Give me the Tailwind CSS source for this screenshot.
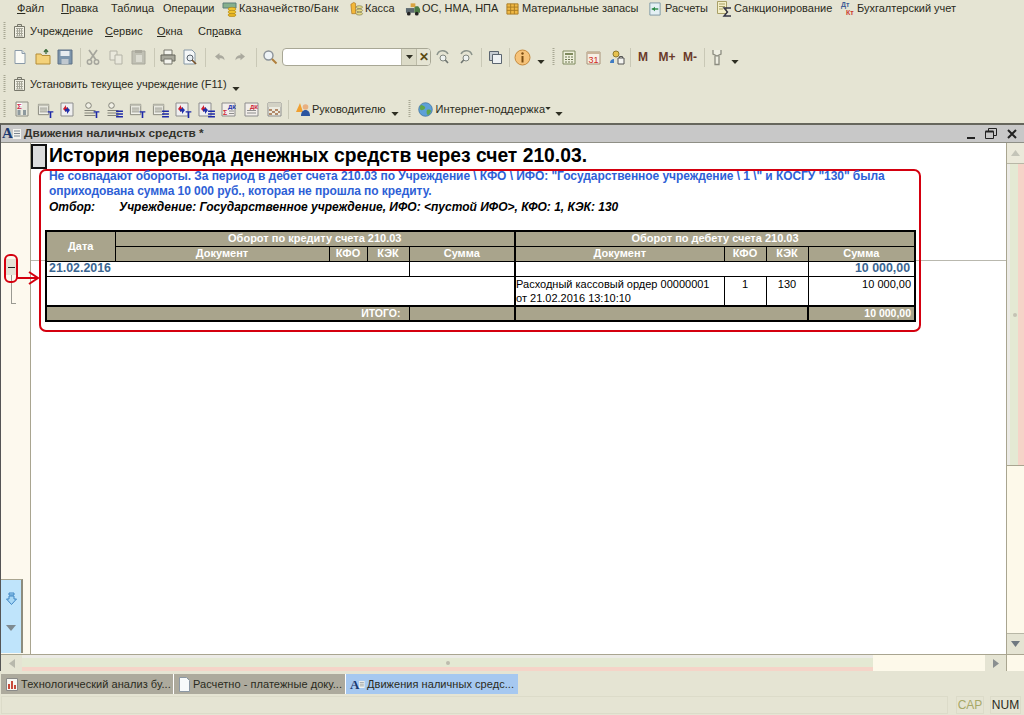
<!DOCTYPE html>
<html lang="ru">
<head>
<meta charset="UTF-8">
<title>Движения наличных средств</title>
<script src="https://cdn.jsdelivr.net/npm/@tailwindcss/browser@4"></script>
</head>
<body class="w-[1024px] h-[715px] overflow-hidden bg-[#e5e4d3] text-[#2a2a20] text-[11px] font-['Liberation_Sans',Arial,sans-serif] flex flex-col relative">

<!-- общие значки -->
<svg class="absolute w-0 h-0">
  <symbol id="doc" viewBox="0 0 16 16"><path d="M3 1.500h7l3 3v10H3z" fill="#fbfbf6" stroke="#8a9aa8"/><path d="M10 1.500v3h3" fill="#dfe6ea" stroke="#8a9aa8"/></symbol>
  <symbol id="build" viewBox="0 0 16 16"><path d="M5.500 1.500h4v2h-4z" fill="#d8d8cc" stroke="#77776a"/><path d="M2.500 3.500h10v11h-10z" fill="#f2f1e6" stroke="#77776a"/><path d="M4 5.500h7M4 8h7M4 10.500h7M4 13h7M5.500 5v8M7.500 5v8M9.500 5v8" stroke="#a5a598"/></symbol>
  <symbol id="sheet" viewBox="0 0 16 16"><path d="M1.500 2.500h11v11h-11z" fill="#f1f1ea" stroke="#85857a"/><path d="M1.500 2.500h11v2h-11z" fill="#c2c2b6"/><path d="M3 6.500h8M3 8.500h8M3 10.500h8" stroke="#8f8f84"/></symbol>
  <symbol id="arrow-down" viewBox="0 0 9 5"><path d="M0 0h9L4.500 5z" fill="#2e2e22"/></symbol>
  <symbol id="t-mark" viewBox="0 0 6 7"><path d="M.5 1h5v1.200H3.700V7H2.300V2.200H.5z" fill="#1c28a8"/></symbol>
  <symbol id="lines" viewBox="0 0 6 7"><path d="M0 1h6M0 3.500h6M0 6h6" stroke="#1c28a8" stroke-width="1.300"/></symbol>
  <symbol id="grip" viewBox="0 0 3 18"><path d="M1.500 0v18" stroke="#a8a794" stroke-width="2" stroke-dasharray="1 1"/></symbol>
  <symbol id="search" viewBox="0 0 16 16"><circle cx="6.500" cy="6.500" r="4.500" fill="#eef3f6" stroke="#8b9299" stroke-width="1.400"/><path d="M10 10l4.500 4.500" stroke="#b07f3c" stroke-width="2"/></symbol>
  <symbol id="find" viewBox="0 0 16 16"><path d="M2 6a6 6 0 0 1 11-1" fill="none" stroke="#8c948c" stroke-width="1.500"/><circle cx="8" cy="9" r="3" fill="#eef2f0" stroke="#80867f"/><path d="M10.300 11l2.700 3" stroke="#6f7570" stroke-width="1.600"/></symbol>
  <symbol id="report-a" viewBox="0 0 15 15"><path d="M1 1h12v13H1z" fill="#efeff0" stroke="#8d8d8d"/><path d="M3 7l3-4v2.500h2V8H6v2z" fill="#cc2030"/><path d="M10 8l-3 4V9.500H5V7h2V5z" fill="#2030a8"/></symbol>
  <symbol id="person" viewBox="0 0 14 15"><circle cx="5" cy="3.500" r="2.800" fill="#f1f0e6" stroke="#84847a"/><path d="M1 8.500h11M1 11h11M1 13.500h11" stroke="#84847a"/></symbol>
</svg>

<!-- меню 1 -->
<div class="h-[17px] flex items-center shrink-0 whitespace-nowrap">
  <span class="ml-[17px] w-[44px]"><u>Ф</u>айл</span>
  <span class="w-[50px]"><u>П</u>равка</span>
  <span class="w-[52px]">Таблица</span>
  <span class="w-[59px]">Операции</span>
  <span class="w-[17px]"><svg class="w-[16px] h-[16px]" viewBox="0 0 16 16"><path d="M1 2h13v5H1z" fill="#86b08c" stroke="#5c7f78"/><ellipse cx="10" cy="8" rx="4" ry="1.700" fill="#f2c52e" stroke="#a8821a" stroke-width=".6"/><ellipse cx="10" cy="11" rx="4" ry="1.700" fill="#f2c52e" stroke="#a8821a" stroke-width=".6"/><ellipse cx="10" cy="14" rx="4" ry="1.700" fill="#e6b422" stroke="#a8821a" stroke-width=".6"/></svg></span>
  <span class="w-[110px] tracking-[0.15px]">Казначейство/Банк</span>
  <span class="w-[16px]"><svg class="w-[15px] h-[16px]" viewBox="0 0 16 16"><path d="M2 3l3-2 2 1v11H3z" fill="#f3b83a" stroke="#a8701a" stroke-width=".7"/><ellipse cx="11" cy="6" rx="3.500" ry="1.500" fill="#e7dc8a" stroke="#6c6a3a" stroke-width=".6"/><ellipse cx="11" cy="9.500" rx="3.500" ry="1.500" fill="#e7dc8a" stroke="#6c6a3a" stroke-width=".6"/><ellipse cx="11" cy="13" rx="3.500" ry="1.500" fill="#e7dc8a" stroke="#6c6a3a" stroke-width=".6"/></svg></span>
  <span class="w-[40px]">Касса</span>
  <span class="w-[17px]"><svg class="w-[16px] h-[16px]" viewBox="0 0 17 16"><path d="M1 7h9v5H1z" fill="#5d6a70"/><path d="M10 5h4l2 3v4h-6z" fill="#4c7d45"/><circle cx="4" cy="13" r="2" fill="#222"/><circle cx="12.500" cy="13" r="2" fill="#222"/><path d="M6 2h5v4H6z" fill="#d9a441"/></svg></span>
  <span class="w-[84px]">ОС, НМА, НПА</span>
  <span class="w-[16px]"><svg class="w-[13px] h-[13px]" viewBox="0 0 14 14"><path d="M1 2h12v11H1z" fill="#f0b945" stroke="#a97b22"/><path d="M1 5.500h12M1 9h12M5 2v11M9 2v11" stroke="#a97b22"/></svg></span>
  <span class="w-[126px]">Материальные запасы</span>
  <span class="w-[17px]"><svg class="w-[14px] h-[14px]" viewBox="0 0 15 15"><path d="M2 1h11v13H2z" fill="#e4f0f4" stroke="#7c98a4"/><path d="M4 7.500h7" stroke="#2a8a45" stroke-width="1.500"/><path d="M7.500 5l-3 2.500 3 2.500z" fill="#2a8a45"/></svg></span>
  <span class="w-[51px]">Расчеты</span>
  <span class="w-[18px]"><svg class="w-[17px] h-[16px]" viewBox="0 0 17 16"><path d="M1.500.500h9v12h-9z" fill="#f4efc8" stroke="#a89f66"/><path d="M3 3h6M3 5.500h6M3 8h4" stroke="#a89f66"/><path d="M15 7H8l3.500 4L8 15h7" fill="none" stroke="#334" stroke-width="1.400"/></svg></span>
  <span class="w-[106px]">Санкционирование</span>
  <span class="w-[17px] h-[16px] relative">
    <span class="absolute left-[1px] top-0 h-[7px] text-[7px] leading-[7px] font-bold text-[#3d5c96]">Дт</span>
    <span class="absolute left-[6px] top-[8px] h-[7px] text-[7px] leading-[7px] font-bold text-[#cc3a2e]">Кт</span>
  </span>
  <span>Бухгалтерский учет</span>
</div>

<!-- меню 2 -->
<div class="h-[26px] pt-[2px] flex items-center shrink-0 whitespace-nowrap">
  <svg class="ml-[3px] w-[3px] h-[18px]"><use href="#grip"/></svg>
  <svg class="ml-[6px] w-[16px] h-[16px]"><use href="#build"/></svg>
  <span class="ml-[2px] w-[75px]">Учреждение</span>
  <span class="w-[52px]"><u>С</u>ервис</span>
  <span class="w-[41px]"><u>О</u>кна</span>
  <span>Сп<u>р</u>авка</span>
</div>

<!-- стандартная панель -->
<div class="h-[28px] flex items-center shrink-0">
  <svg class="ml-[3px] w-[3px] h-[18px]"><use href="#grip"/></svg>
  <span class="ml-[3px] w-[22px] flex justify-center"><svg class="w-[16px] h-[16px]"><use href="#doc"/></svg></span>
  <span class="w-[23px] flex justify-center"><svg class="w-[16px] h-[16px]" viewBox="0 0 16 16"><path d="M1 5h5l1 1.500h8V15H1z" fill="#f4d27a" stroke="#b38c36"/><path d="M11 5V1M9 3l2-2.500L13 3" fill="none" stroke="#3d6b3c" stroke-width="1.300"/></svg></span>
  <span class="w-[22px] flex justify-center"><svg class="w-[16px] h-[16px]" viewBox="0 0 16 16"><path d="M1 1h14v14H1z" fill="#7d95ac" stroke="#5e7186"/><path d="M3.500 2h9v5h-9z" fill="#e8ecef"/><path d="M4.500 10h7v5h-7z" fill="#c0c8cf"/></svg></span>
  <span class="ml-[4px] w-px h-[19px] bg-[#c9c8b6]"></span>
  <span class="ml-[1px] w-[22px] flex justify-center"><svg class="w-[16px] h-[16px]" viewBox="0 0 16 16"><path d="M4 1l7 10M12 1L5 11" stroke="#a6a69d" stroke-width="1.700"/><circle cx="4.500" cy="13" r="2.200" fill="none" stroke="#a6a69d" stroke-width="1.500"/><circle cx="11.500" cy="13" r="2.200" fill="none" stroke="#a6a69d" stroke-width="1.500"/></svg></span>
  <span class="w-[23px] flex justify-center"><svg class="w-[16px] h-[16px]" viewBox="0 0 16 16"><path d="M2 2h7v9H2z" fill="#e9e8dc" stroke="#b3b2a6"/><path d="M7 6h7v9H7z" fill="#e9e8dc" stroke="#b3b2a6"/></svg></span>
  <span class="w-[24px] flex justify-center"><svg class="w-[16px] h-[16px]" viewBox="0 0 16 16"><path d="M1 2h13v13H1z" fill="#c0c0b4" stroke="#a9a89c"/><path d="M4 1h7v3H4z" fill="#aaa99d"/><path d="M5 6h6v7H5z" fill="#dcdcd2"/></svg></span>
  <span class="ml-[3px] w-px h-[19px] bg-[#c9c8b6]"></span>
  <span class="ml-[2px] w-[22px] flex justify-center"><svg class="w-[16px] h-[16px]" viewBox="0 0 16 16"><path d="M4 1h8v5H4z" fill="#f4f4ee" stroke="#77776c"/><path d="M1 6h14v6H1z" fill="#a8a89c" stroke="#66665c"/><path d="M4 10h8v5H4z" fill="#f4f4ee" stroke="#77776c"/></svg></span>
  <span class="w-[22px] flex justify-center"><svg class="w-[16px] h-[16px]" viewBox="0 0 16 16"><path d="M2 1h8l3 3v11H2z" fill="#f4f7f8" stroke="#8698a6"/><circle cx="8" cy="9" r="3" fill="#e8eef2" stroke="#55606a"/><path d="M10 11l4 4" stroke="#76522a" stroke-width="1.700"/></svg></span>
  <span class="ml-[4px] w-px h-[19px] bg-[#c9c8b6]"></span>
  <span class="ml-[4px] w-[20px] flex justify-center"><svg class="w-[12px] h-[12px]" viewBox="0 0 12 12"><path d="M1 5.500L5.500 2v2.200c3 0 5 1.500 5 5-1.200-1.700-2.800-2-5-2v2z" fill="#aaa99e"/></svg></span>
  <span class="w-[20px] flex justify-center"><svg class="w-[12px] h-[12px]" viewBox="0 0 12 12"><path d="M11 5.500L6.500 2v2.200c-3 0-5 1.500-5 5 1.200-1.700 2.800-2 5-2v2z" fill="#aaa99e"/></svg></span>
  <span class="ml-[6px] w-px h-[19px] bg-[#c9c8b6]"></span>
  <span class="ml-[4px] w-[18px] flex justify-center"><svg class="w-[16px] h-[16px]"><use href="#search"/></svg></span>
  <div class="ml-[3px] w-[149px] h-[18px] flex items-center rounded-[4px] border border-[#a8a795] bg-white overflow-hidden">
    <span class="flex-1"></span>
    <span class="w-[15px] h-full bg-[#dcdbc7] border-l border-[#bdbca8] flex items-center justify-center"><svg class="w-[7px] h-[4px]"><use href="#arrow-down"/></svg></span>
    <span class="w-[14px] h-full bg-[#e5e4d3] border-l border-[#bdbca8] flex items-center justify-center text-[#5a4a12] font-bold text-[12px] leading-none">✕</span>
  </div>
  <span class="ml-[1px] w-[22px] flex justify-center"><svg class="w-[16px] h-[16px]"><use href="#find"/></svg></span>
  <span class="w-[23px] flex justify-center"><svg class="w-[16px] h-[16px] -scale-x-100"><use href="#find"/></svg></span>
  <span class="ml-[4px] w-px h-[19px] bg-[#c9c8b6]"></span>
  <span class="ml-[2px] w-[22px] flex justify-center"><svg class="w-[15px] h-[15px]" viewBox="0 0 15 15"><path d="M1.500 1.500h9v9h-9z" fill="#c6ccd2" stroke="#5b6570"/><path d="M4.500 4.500h9v9h-9z" fill="#eef1f3" stroke="#5b6570"/></svg></span>
  <span class="ml-[3px] w-px h-[19px] bg-[#c9c8b6]"></span>
  <span class="ml-[1px] w-[22px] flex justify-center"><svg class="w-[17px] h-[17px]" viewBox="0 0 17 17"><circle cx="8.500" cy="8.500" r="7.500" fill="#f6c37a" stroke="#c58a3c"/><circle cx="8.500" cy="4.500" r="1.200" fill="#7a4c12"/><path d="M8.500 7v6.500" stroke="#7a4c12" stroke-width="2"/></svg></span>
  <svg class="mt-[9px] ml-[4px] w-[8px] h-[4px]"><use href="#arrow-down"/></svg>
  <svg class="ml-[7px] w-[3px] h-[18px]"><use href="#grip"/></svg>
  <span class="ml-[2px] w-[24px] flex justify-center"><svg class="w-[14px] h-[15px]" viewBox="0 0 14 15"><path d="M1 1h12v13H1z" fill="#eef0dc" stroke="#7f8a5e"/><path d="M3 3h8v2H3z" fill="#7f8a5e"/><path d="M3 7h2M6 7h2M9 7h2M3 9.500h2M6 9.500h2M9 9.500h2M3 12h2M6 12h2M9 12h2" stroke="#6c7550"/></svg></span>
  <span class="w-[24px] flex justify-center"><svg class="w-[15px] h-[15px]" viewBox="0 0 15 15"><path d="M1 2h13v12H1z" fill="#f7efe6" stroke="#a89278"/><path d="M1 2h13v2H1z" fill="#c9b49a"/><text x="7.500" y="12.500" text-anchor="middle" font-size="9" fill="#d02a20" font-family="Liberation Sans">31</text></svg></span>
  <span class="w-[23px] flex justify-center"><svg class="w-[16px] h-[15px]" viewBox="0 0 16 15"><circle cx="7" cy="4" r="3" fill="#e8c24e" stroke="#8f7a2c"/><path d="M1 13c0-3 2-4 4-4v4z" fill="#3f7cc4"/><path d="M9 8h6v6H9z" fill="#f4f4f0" stroke="#555"/><path d="M10.500 8V6.500h3V8" fill="none" stroke="#555"/></svg></span>
  <span class="ml-[2px] w-px h-[19px] bg-[#c9c8b6]"></span>
  <span class="ml-[3px] w-[18px] text-center font-bold text-[12px] text-[#6a3a2a]">M</span>
  <span class="ml-[5px] w-[20px] text-center font-bold text-[12px] text-[#6a3a2a]">M+</span>
  <span class="ml-[3px] w-[20px] text-center font-bold text-[12px] text-[#6a3a2a]">M-</span>
  <span class="ml-[4px] w-px h-[19px] bg-[#c9c8b6]"></span>
  <span class="ml-[1px] w-[22px] flex justify-center"><svg class="w-[14px] h-[17px]" viewBox="0 0 14 17"><path d="M3 1v4l4 2 4-2V1M5 7v8.500h4V7" fill="#eeeee2" stroke="#8c8c80" stroke-width="1.300"/></svg></span>
  <svg class="mt-[9px] ml-[3px] w-[8px] h-[4px]"><use href="#arrow-down"/></svg>
</div>

<!-- установить учреждение -->
<div class="h-[26px] flex items-center shrink-0">
  <svg class="ml-[3px] w-[3px] h-[18px]"><use href="#grip"/></svg>
  <svg class="ml-[6px] w-[16px] h-[16px]"><use href="#build"/></svg>
  <span class="ml-[2px]">Установить текущее учреждение (F11)</span>
  <svg class="mt-[9px] ml-[5px] w-[8px] h-[4px]"><use href="#arrow-down"/></svg>
</div>

<!-- панель отчетов -->
<div class="h-[26px] pb-[2px] flex items-center shrink-0">
  <svg class="ml-[3px] w-[3px] h-[18px]"><use href="#grip"/></svg>
  <span class="ml-[4px] w-[23px] flex justify-center"><svg class="w-[16px] h-[16px]" viewBox="0 0 16 16"><path d="M2 1h12v14H2z" fill="#e9e9de" stroke="#8e8e84"/><path d="M3 2h5v3H3z" fill="#fff"/><text x="3" y="8" font-size="8" font-weight="bold" fill="#d02a50" font-family="Liberation Sans">Σ</text><path d="M3.500 9h3v5h-3zM9 9h3v5H9z" fill="#8e9a9e"/></svg></span>
  <span class="w-[23px] flex justify-center relative"><svg class="w-[15px] h-[15px]"><use href="#sheet"/></svg><svg class="absolute right-[2px] -bottom-[1px] w-[7px] h-[8px]"><use href="#t-mark"/></svg></span>
  <span class="w-[23px] flex justify-center"><svg class="w-[15px] h-[15px]"><use href="#report-a"/></svg></span>
  <span class="w-[23px] flex justify-center relative"><svg class="w-[15px] h-[15px]"><use href="#person"/></svg><svg class="absolute right-[2px] -bottom-[1px] w-[7px] h-[8px]"><use href="#t-mark"/></svg></span>
  <span class="w-[23px] flex justify-center relative"><svg class="w-[15px] h-[15px]"><use href="#person"/></svg><svg class="absolute right-[2px] -bottom-[1px] w-[7px] h-[8px]"><use href="#lines"/></svg></span>
  <span class="w-[23px] flex justify-center relative"><svg class="w-[15px] h-[15px]"><use href="#sheet"/></svg><svg class="absolute right-[2px] -bottom-[1px] w-[7px] h-[8px]"><use href="#t-mark"/></svg></span>
  <span class="w-[23px] flex justify-center relative"><svg class="w-[15px] h-[15px]"><use href="#sheet"/></svg><svg class="absolute right-[2px] -bottom-[1px] w-[7px] h-[8px]"><use href="#lines"/></svg></span>
  <span class="w-[23px] flex justify-center relative"><svg class="w-[15px] h-[15px]"><use href="#report-a"/></svg><svg class="absolute right-[2px] -bottom-[1px] w-[7px] h-[8px]"><use href="#t-mark"/></svg></span>
  <span class="w-[23px] flex justify-center relative"><svg class="w-[15px] h-[15px]"><use href="#report-a"/></svg><svg class="absolute right-[2px] -bottom-[1px] w-[7px] h-[8px]"><use href="#lines"/></svg></span>
  <span class="w-[23px] flex justify-center"><svg class="w-[15px] h-[15px]" viewBox="0 0 15 15"><path d="M1 1h13v13H1z" fill="#f2eeea" stroke="#8d8d8d"/><text x="7" y="6.500" font-size="6" font-weight="bold" fill="#2030a8" font-family="Liberation Sans">ДК</text><text x="2" y="13" font-size="7" font-weight="bold" fill="#cc2030" font-family="Liberation Sans">Σ</text><path d="M8 9h5M8 11.500h5" stroke="#8d8d8d"/></svg></span>
  <span class="w-[23px] flex justify-center"><svg class="w-[15px] h-[15px]" viewBox="0 0 15 15"><path d="M1 1h13v13H1z" fill="#f2eeea" stroke="#8d8d8d"/><text x="6" y="6.500" font-size="6" font-weight="bold" fill="#cc2030" font-family="Liberation Sans">ДК</text><path d="M3 8.500h9M3 11h9" stroke="#8d8d8d"/></svg></span>
  <span class="w-[23px] flex justify-center"><svg class="w-[15px] h-[15px]" viewBox="0 0 15 15"><path d="M1 1h13v13H1z" fill="#ecebe0" stroke="#8d8d8d"/><path d="M1 1h13v4H1z" fill="#d2d1c4"/><path d="M2 7h3v2H2zM8 7h3v2H8zM5 9h3v2H5zM11 9h2v2h-2zM2 11h3v2H2zM8 11h3v2H8z" fill="#b28a6a"/></svg></span>
  <span class="ml-[2px] w-px h-[19px] bg-[#c9c8b6]"></span>
  <svg class="ml-[6px] w-[16px] h-[16px]" viewBox="0 0 16 16"><path d="M1 11L5 2l3 9z" fill="#f0a030"/><circle cx="10.500" cy="6" r="2.800" fill="#e9b080"/><path d="M6 15c0-4 2-6 4.500-6s4.500 2 4.500 6z" fill="#2c55a0"/></svg>
  <span class="ml-[1px]">Руководителю</span>
  <svg class="mt-[9px] ml-[6px] w-[8px] h-[4px]"><use href="#arrow-down"/></svg>
  <svg class="ml-[9px] w-[3px] h-[18px]"><use href="#grip"/></svg>
  <svg class="ml-[7px] w-[15px] h-[15px]" viewBox="0 0 15 15"><circle cx="7.500" cy="7.500" r="6.800" fill="#5da0d8" stroke="#3a6f9c" stroke-width=".7"/><path d="M3 3c2 0 3 1 4 2S5 9 3 8 2 4 3 3zM9 8c2-1 4 0 4 1s-2 4-3 4-2-3-1-5z" fill="#5fa64a"/></svg>
  <span class="ml-[2px] w-[110px] tracking-[0.15px]">Интернет-поддержка</span>
  <svg class="mb-[1px] w-[6px] h-[3px]"><use href="#arrow-down"/></svg>
  <svg class="mt-[9px] ml-[4px] w-[8px] h-[4px]"><use href="#arrow-down"/></svg>
</div>

<!-- окно отчета -->
<div class="h-[548px] shrink-0 flex flex-col border-t-2 border-[#66665c] border-l border-l-[#555] relative">
  <div class="h-[17px] bg-[#c8c8c8] border-b border-[#8f8f86] flex items-center shrink-0 box-content">
    <span class="ml-[1px] w-[19px] h-[16px] flex items-center font-['Liberation_Serif',serif] font-bold text-[15px] text-[#1c3a70] leading-none">A<svg class="w-[8px] h-[12px]" viewBox="0 0 8 12"><path d="M0 1h8v10H0z" fill="#f3f3ee"/><path d="M1 3h6M1 5.500h6M1 8h6" stroke="#7d8790"/></svg></span>
    <span class="ml-[3px] font-bold text-[11.800px] text-[#33332c]">Движения наличных средств *</span>
    <div class="ml-auto flex items-center text-[#222]">
      <span class="w-[8px] h-[2px] bg-[#222] mt-[9px]"></span>
      <svg class="ml-[10px] w-[12px] h-[11px]" viewBox="0 0 12 11"><path d="M3.500 3V.500h8v7H9" fill="none" stroke="#222"/><path d="M.500 3.500h8v7h-8z" fill="none" stroke="#222"/><path d="M.500 3.500h8" stroke="#222" stroke-width="2"/></svg>
      <svg class="ml-[10px] mr-[7px] w-[10px] h-[10px]" viewBox="0 0 10 10"><path d="M1 1l8 8M9 1l-8 8" stroke="#222" stroke-width="2"/></svg>
    </div>
  </div>

  <div class="flex-1 min-h-0 flex bg-white relative">
    <!-- линия текущей строки -->
    <div class="absolute left-0 w-[1005px] top-[117px] h-px bg-[#b9b8ae]"></div>

    <!-- поле группировки -->
    <div class="w-[30px] shrink-0 bg-[#fdf9ee] border-r border-[#a9a590] flex flex-col relative">
      <div class="absolute left-[5px] top-[116px] w-[10px] h-[16px] bg-[#e4e3d6] flex items-center justify-center"><span class="w-[7px] h-px bg-[#222]"></span></div>
      <div class="absolute left-[10px] top-[132px] w-[5px] h-[29px] border-l border-b border-[#9a9a92]"></div>
      <div class="mt-auto mb-[1px] w-[22px] h-[74px] bg-[#bfe4fb] border-t border-r-2 border-t-[#a9a590] border-r-[#8d8c7d] flex flex-col items-center">
        <svg class="mt-[12px] w-[11px] h-[13px]" viewBox="0 0 11 13"><path d="M3 1h5v2H3zM3 4h5v3h2.500l-5 5.500-5-5.500H3z" fill="#a8d8f6" stroke="#3f86c4"/></svg>
        <svg class="mt-[20px] w-[10px] h-[6px]" viewBox="0 0 10 6"><path d="M0 0h10L5 6z" fill="#7e8a90"/></svg>
      </div>
    </div>

    <!-- содержимое отчета -->
    <div class="flex-1 min-w-0 relative">
      <div class="h-[26px] flex items-center">
        <span class="w-[16px] h-[25px] bg-[#dcdcdc] border-2 border-[#111]"></span>
        <h1 class="ml-[2px] text-[19.300px] font-bold text-black leading-none">История перевода денежных средств через счет 210.03.</h1>
      </div>
      <div class="ml-[8px] w-[882px] h-[163px] border-2 border-[#d4000f] rounded-[7px]">
        <div class="pl-[8px] -mt-[2px]">
          <p class="text-[12px] font-bold text-[#2e5fd6] leading-[15px] tracking-[-0.06px]">Не совпадают обороты. За период в дебет счета 210.03 по Учреждение \ КФО \ ИФО: "Государственное учреждение \ 1 \" и КОСГУ "130" была<br>оприходована сумма 10 000 руб., которая не прошла по кредиту.</p>
          <p class="mt-px flex text-[12px] font-bold italic text-black leading-[15px]"><span class="w-[70px]">Отбор:</span><span>Учреждение: Государственное учреждение, ИФО: &lt;пустой ИФО&gt;, КФО: 1, КЭК: 130</span></p>
        </div>
        <table class="ml-[4px] mt-[15px] w-[869px] table-fixed border-collapse border-2 border-black text-[11px]">
          <colgroup>
            <col class="w-[69px]"><col class="w-[214px]"><col class="w-[38px]"><col class="w-[42px]"><col class="w-[106px]"><col class="w-[209px]"><col class="w-[42px]"><col class="w-[42px]"><col class="w-[107px]">
          </colgroup>
          <thead class="bg-[#a9a48c] text-white font-bold text-[11px] leading-none">
            <tr class="h-[15px]">
              <th rowspan="2" class="border border-black">Дата</th>
              <th colspan="4" class="border border-black border-r-2">Оборот по кредиту счета 210.03</th>
              <th colspan="4" class="border border-black">Оборот по дебету счета 210.03</th>
            </tr>
            <tr class="h-[15px]">
              <th class="border border-black">Документ</th>
              <th class="border border-black">КФО</th>
              <th class="border border-black">КЭК</th>
              <th class="border border-black border-r-2">Сумма</th>
              <th class="border border-black">Документ</th>
              <th class="border border-black">КФО</th>
              <th class="border border-black">КЭК</th>
              <th class="border border-black">Сумма</th>
            </tr>
          </thead>
          <tbody class="leading-none">
            <tr class="h-[15px] font-bold text-[#3a6591]">
              <td colspan="4" class="border border-black pl-[2px] text-[12.400px]">21.02.2016</td>
              <td class="border border-black border-r-2"></td>
              <td colspan="3" class="border border-black"></td>
              <td class="border border-black text-right pr-[4px] text-[12.400px]">10 000,00</td>
            </tr>
            <tr class="h-[29px] align-top text-[11px] text-black">
              <td colspan="5" class="border border-black border-r-2"></td>
              <td class="border border-black pl-0 leading-[14px]">Расходный кассовый ордер 00000001<br>от 21.02.2016 13:10:10</td>
              <td class="border border-black text-center pt-[2px]">1</td>
              <td class="border border-black text-center pt-[2px]">130</td>
              <td class="border border-black text-right pr-[3px] pt-[2px]">10 000,00</td>
            </tr>
            <tr class="h-[15px] bg-[#a9a48c] text-white font-bold text-[10.500px]">
              <td colspan="4" class="border border-black border-t-2 text-right pr-[8px]">ИТОГО:</td>
              <td class="border border-black border-t-2 border-r-2"></td>
              <td colspan="3" class="border border-black border-t-2 border-r-2"></td>
              <td class="border border-black border-t-2 text-right pr-[3px]">10 000,00</td>
            </tr>
          </tbody>
        </table>
      </div>
    </div>

    <!-- вертикальная прокрутка -->
    <div class="w-[18px] shrink-0 bg-[#fdf9ea] border-l border-[#a9a590] flex flex-col">
      <div class="h-[21px] bg-[#ebe9da] border-b border-[#b8b7a6] flex items-center justify-center"><svg class="w-[9px] h-[6px]" viewBox="0 0 9 6"><path d="M0 6h9L4.500 0z" fill="#c4c4b8"/></svg></div>
      <div class="h-[302px] flex border-b border-[#a9a590] relative">
        <span class="w-[3px] bg-[#ecebe6]"></span>
        <span class="w-[8px] bg-[#e4e9d3]"></span>
        <span class="flex-1 bg-[#f5d4c8]"></span>
        <span class="absolute left-[6px] top-[149px] w-[4px] h-[4px] rounded-full bg-[#c4c3b4]"></span>
      </div>
      <div class="flex-1"></div>
      <div class="h-[21px] bg-[#e5e4d3] border-t border-[#b8b7a6] flex items-center justify-center"><svg class="w-[9px] h-[6px]" viewBox="0 0 9 6"><path d="M0 0h9L4.500 6z" fill="#6f7880"/></svg></div>
    </div>

    <!-- выноска: стрелка и обводка минуса -->
    <svg class="absolute left-0 top-0 w-[50px] h-[160px] pointer-events-none" viewBox="0 0 50 160" fill="none" stroke="#d4000f" stroke-width="2">
      <rect x="4" y="112" width="12" height="27" rx="5"/>
      <path d="M16 135h21M28 129l9 6-9 6"/>
    </svg>
  </div>

  <!-- горизонтальная прокрутка -->
  <div class="h-[17px] shrink-0 flex border-t border-[#a9a590] bg-[#fdf9ea]">
    <div class="w-[21px] bg-[#e5e4d3] flex items-center justify-center"><svg class="w-[6px] h-[9px]" viewBox="0 0 6 9"><path d="M6 0v9L0 4.500z" fill="#b8b8ac"/></svg></div>
    <div class="w-[851px] flex flex-col relative">
      <div class="h-[3px] bg-[#ecebe6]"></div>
      <div class="flex-1 bg-[#e4e9d3]"></div>
      <div class="h-[4px] bg-[#f5d4c8]"></div>
      <span class="absolute left-[424px] top-[6px] w-[4px] h-[4px] rounded-full bg-[#bdbcae]"></span>
    </div>
    <div class="w-[112px]"></div>
    <div class="w-[21px] bg-[#e5e4d3] flex items-center justify-center"><svg class="w-[6px] h-[9px]" viewBox="0 0 6 9"><path d="M0 0v9l6-4.500z" fill="#8a8f90"/></svg></div>
    <div class="flex-1 border-l border-[#a9a590]"></div>
  </div>
</div>

<!-- панель окон -->
<div class="h-[20px] mt-[3px] shrink-0 flex items-stretch pl-px text-[11px] tracking-[0.05px] whitespace-nowrap">
  <div class="w-[173px] bg-[#adaa9d] flex items-center border-r border-white">
    <svg class="ml-[5px] w-[12px] h-[13px]" viewBox="0 0 12 13"><path d="M.500.500h11v12H.500z" fill="#f7f7f2" stroke="#8a8a88"/><path d="M3 11V6M6 11V3M9 11V7" stroke-width="2" stroke="#c84a3a"/></svg>
    <span class="ml-[3px]">Технологический анализ бу...</span>
  </div>
  <div class="w-[172px] bg-[#adaa9d] flex items-center border-r border-white">
    <svg class="ml-[4px] w-[13px] h-[15px]" viewBox="0 0 13 15"><path d="M1.500.500h7l3 3v11h-10z" fill="#f8fafa" stroke="#8c98a4"/></svg>
    <span class="ml-[2px]">Расчетно - платежные доку...</span>
  </div>
  <div class="w-[172px] bg-[#a6c8f0] flex items-center">
    <span class="ml-[4px] w-[15px] flex items-center font-['Liberation_Serif',serif] font-bold text-[13px] text-[#1c3a70] leading-none">A<svg class="w-[7px] h-[11px]" viewBox="0 0 8 12"><path d="M0 1h8v10H0z" fill="#f3f3ee"/><path d="M1 3h6M1 5.500h6M1 8h6" stroke="#7d8790"/></svg></span>
    <span class="ml-[2px]">Движения наличных средс...</span>
  </div>
</div>

<!-- строка состояния -->
<div class="h-[21px] shrink-0 flex items-center gap-[6px] pl-px pr-[3px] text-[12px]">
  <span class="flex-1 h-[18px] border border-[#dcdbc9]"></span>
  <span class="ml-[2px] w-[28px] h-[18px] border border-[#dcdbc9] text-[#a7a868] text-center leading-[17px]">CAP</span>
  <span class="w-[31px] h-[18px] border border-[#dcdbc9] text-center leading-[17px]">NUM</span>
</div>

</body>
</html>
